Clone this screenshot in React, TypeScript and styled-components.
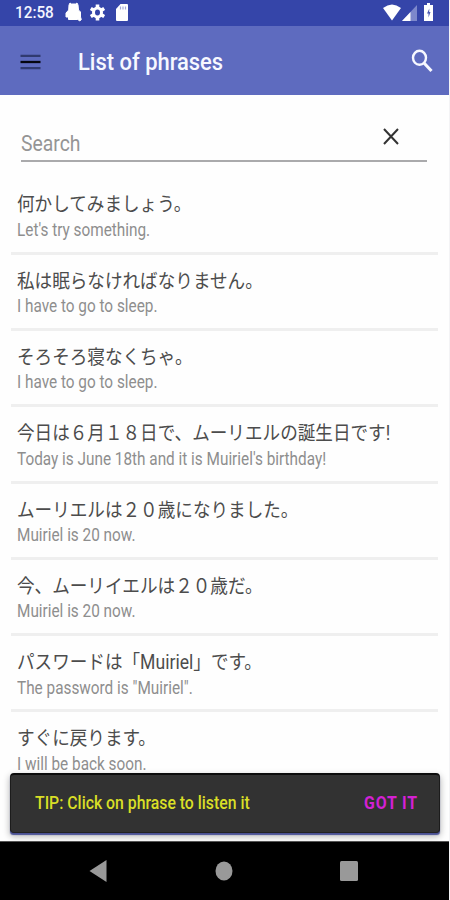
import React from "react";
import styled, { createGlobalStyle } from "styled-components";

const GlobalStyle = createGlobalStyle`
  * { box-sizing: border-box; }
  body { margin: 0; background: #fff; font-family: Roboto, "Noto Sans CJK JP", sans-serif; }
`;

const Screen = styled.div`
  width: 450px;
  height: 900px;
  overflow: hidden;
  display: flex;
  flex-direction: column;
  background: #fefefe;
  border-right: 1px solid #f3f3f5;
`;

const Label = styled.span<{ $size: number; $squeeze: number; $color: string; $weight?: number; $spacing?: number }>`
  display: block;
  white-space: nowrap;
  font-size: ${(p) => p.$size}px;
  font-weight: ${(p) => p.$weight ?? 400};
  letter-spacing: ${(p) => p.$spacing ?? 0}px;
  color: ${(p) => p.$color};
  transform: scaleX(${(p) => p.$squeeze});
  transform-origin: left center;
`;

const StatusBar = styled.header`
  height: 26px;
  flex: none;
  display: flex;
  align-items: center;
  justify-content: space-between;
  padding: 0 16px 2px 15px;
  background: #3545a9;
`;

const Clock = styled.div`
  width: 50px;
`;

const StatusGroup = styled.div`
  display: flex;
  align-items: center;
  svg { display: block; }
`;

const GearIcon = styled.svg`
  margin-left: 8px;
`;

const CardIcon = styled.svg`
  margin-left: 11px;
`;

const SignalIcon = styled.svg`
  margin-left: 1.5px;
`;

const BatteryIcon = styled.svg`
  margin-left: 7px;
`;

const AppBar = styled.div`
  height: 69px;
  flex: none;
  display: flex;
  align-items: center;
  padding: 3px 16px 0 20px;
  background: #5e6bbf;
  svg { display: block; }
`;

const SearchIcon = styled.svg`
  margin-top: -3px;
`;

const Title = styled.div`
  flex: 1;
  margin-left: 37px;
`;

const SearchField = styled.div`
  height: 67px;
  flex: none;
  margin: 0 22px 0 21px;
  padding: 29px 28px 0 0;
  display: flex;
  justify-content: space-between;
  border-bottom: 2px solid #aaaaac;
  svg { display: block; margin-top: 4px; }
`;

const Placeholder = styled.div`
  line-height: 39px;
`;

const List = styled.main`
  flex: 1;
  min-height: 0;
  overflow: hidden;
  padding: 16.4px 11px 0;
`;

const Phrase = styled.article`
  height: 76.3px;
  padding: 13px 0 0 6px;
  border-bottom: 3px solid #efefef;
`;

const Original = styled.div`
  height: 26.5px;
  line-height: 27px;
`;

const Translation = styled.div`
  height: 24px;
  line-height: 24px;
`;

const SnackbarArea = styled.div`
  height: 68px;
  flex: none;
  padding: 0 9px 0 10px;
`;

const Snackbar = styled.div`
  height: 60px;
  display: flex;
  align-items: center;
  padding: 0 20px 1px 24px;
  justify-content: space-between;
  background: #323232;
  border-radius: 4px;
  border: 1px solid #1c1c1c;
  border-top: 2px solid #0c0c0c;
  border-bottom: 1px solid #222;
  box-shadow: 0 2px 1px -0.5px #4a5195, 0 3px 6px 1px rgba(0, 0, 0, 0.25);
`;

const Action = styled.button`
  border: 0;
  padding: 0 0 1px;
  width: 55px;
  background: none;
  font-family: inherit;
`;

const NavBar = styled.nav`
  height: 59px;
  flex: none;
  display: flex;
  align-items: center;
  padding: 0 91px 0 89px;
  justify-content: space-between;
  background: #000;
  border-top: 1px solid #555;
  svg { display: block; }
`;

const phrases: [string, string][] = [
  ["何かしてみましょう。", "Let's try something."],
  ["私は眠らなければなりません。", "I have to go to sleep."],
  ["そろそろ寝なくちゃ。", "I have to go to sleep."],
  ["今日は６月１８日で、ムーリエルの誕生日です!", "Today is June 18th and it is Muiriel's birthday!"],
  ["ムーリエルは２０歳になりました。", "Muiriel is 20 now."],
  ["今、ムーリイエルは２０歳だ。", "Muiriel is 20 now."],
  ["パスワードは「Muiriel」です。", "The password is \"Muiriel\"."],
  ["すぐに戻ります。", "I will be back soon."],
];

export default function App() {
  return (
    <>
      <GlobalStyle />
      <Screen>
        <StatusBar>
          <StatusGroup>
            <Clock>
              <Label $size={17} $squeeze={0.9} $color="#f4f5ff" $weight={500}>12:58</Label>
            </Clock>
            <svg width="17" height="20" viewBox="0 0 17 20" fill="#fff">
              <path d="M4 3 5 1l1.500 1h4L12 1l1 2 .5 5 2 2v5l.8 2.500-1.500 1.500-2-1.500H3.500V15H1v-4l2.700-3z" stroke="#fff" strokeWidth="1" strokeLinejoin="round" />
            </svg>
            <GearIcon width="15" height="17" viewBox="0 0 15 17">
              <ellipse cx="7.500" cy="8.500" rx="4" ry="4.500" fill="none" stroke="#fff" strokeWidth="3" />
              <path d="M7.500.5v3M7.500 13.500v3M.8 4.500l2.700 1.600M11.500 10.900l2.700 1.600M.8 12.500l2.700-1.600M11.500 6.100l2.700-1.600" stroke="#fff" strokeWidth="3.600" />
            </GearIcon>
            <CardIcon width="12" height="17" viewBox="0 0 12 17">
              <path d="M4.500 0H11q1 0 1 1v15q0 1-1 1H1q-1 0-1-1V5z" fill="#fff" />
              <path d="M4.500 2.500v3M7 2.500v3M9.500 2.500v3" stroke="#a3aada" strokeWidth="1.200" />
            </CardIcon>
          </StatusGroup>
          <StatusGroup>
            <svg width="18" height="17" viewBox="0 0 18 17">
              <path d="M0 4Q9-3 18 4L9 16.500z" fill="#fff" />
            </svg>
            <SignalIcon width="15" height="17" viewBox="0 0 15 17">
              <path d="M0 17 15 1v16z" fill="#7d88cb" />
              <path d="M0 17 8.500 8v9z" fill="#fff" />
            </SignalIcon>
            <BatteryIcon width="9" height="18" viewBox="0 0 9 18">
              <path d="M3 0h3v2h3v16H0V2h3z" fill="#fff" />
              <path d="M5.300 5.500 3 10.500H4.500V14.500l2-5.500H5.200z" fill="#4b59b2" />
            </BatteryIcon>
          </StatusGroup>
        </StatusBar>
        <AppBar>
          <svg width="21" height="17" viewBox="0 0 21 17">
            <path d="M.5 1.800h20M.5 14.200h20" stroke="#303a70" strokeWidth="2.200" />
            <path d="M.5 8h20" stroke="#05060f" strokeWidth="2.300" />
          </svg>
          <Title>
            <Label $size={24} $squeeze={0.914} $color="#f7f8ff" $weight={500}>List of phrases</Label>
          </Title>
          <SearchIcon width="22" height="24" viewBox="0 0 22 24" fill="none" stroke="#f7f8ff">
            <ellipse cx="8.500" cy="8.800" rx="6.500" ry="7" strokeWidth="2.400" />
            <path d="m13 14 7.500 8" strokeWidth="3" />
          </SearchIcon>
        </AppBar>
        <SearchField>
          <Placeholder>
            <Label $size={22} $squeeze={0.88} $color="#959595">Search</Label>
          </Placeholder>
          <svg width="16" height="17" viewBox="0 0 16 17">
            <path d="m1 1 14 15M15 1 1 16" stroke="#333" strokeWidth="2" />
          </svg>
        </SearchField>
        <List>
          {phrases.map(([jp, en]) => (
            <Phrase key={jp}>
              <Original>
                <Label $size={19.5} $squeeze={0.902} $color="#4c4c4c">{jp}</Label>
              </Original>
              <Translation>
                <Label $size={17.5} $squeeze={0.876} $color="#8e8e8e">{en}</Label>
              </Translation>
            </Phrase>
          ))}
        </List>
        <SnackbarArea>
          <Snackbar>
            <Label $size={17.5} $squeeze={0.903} $color="#d9df26" $weight={500}>TIP: Click on phrase to listen it</Label>
            <Action>
              <Label $size={18} $squeeze={0.88} $color="#d321d3" $weight={700} $spacing={1}>GOT IT</Label>
            </Action>
          </Snackbar>
        </SnackbarArea>
        <NavBar>
          <svg width="18" height="22" viewBox="0 0 18 22"><path d="M.5 11 17.500 0v22z" fill="#999" /></svg>
          <svg width="18" height="20" viewBox="0 0 18 20"><ellipse cx="9" cy="10" rx="8.500" ry="9.500" fill="#999" /></svg>
          <svg width="18" height="20" viewBox="0 0 18 20"><rect width="18" height="20" rx="1.500" fill="#999" /></svg>
        </NavBar>
      </Screen>
    </>
  );
}
